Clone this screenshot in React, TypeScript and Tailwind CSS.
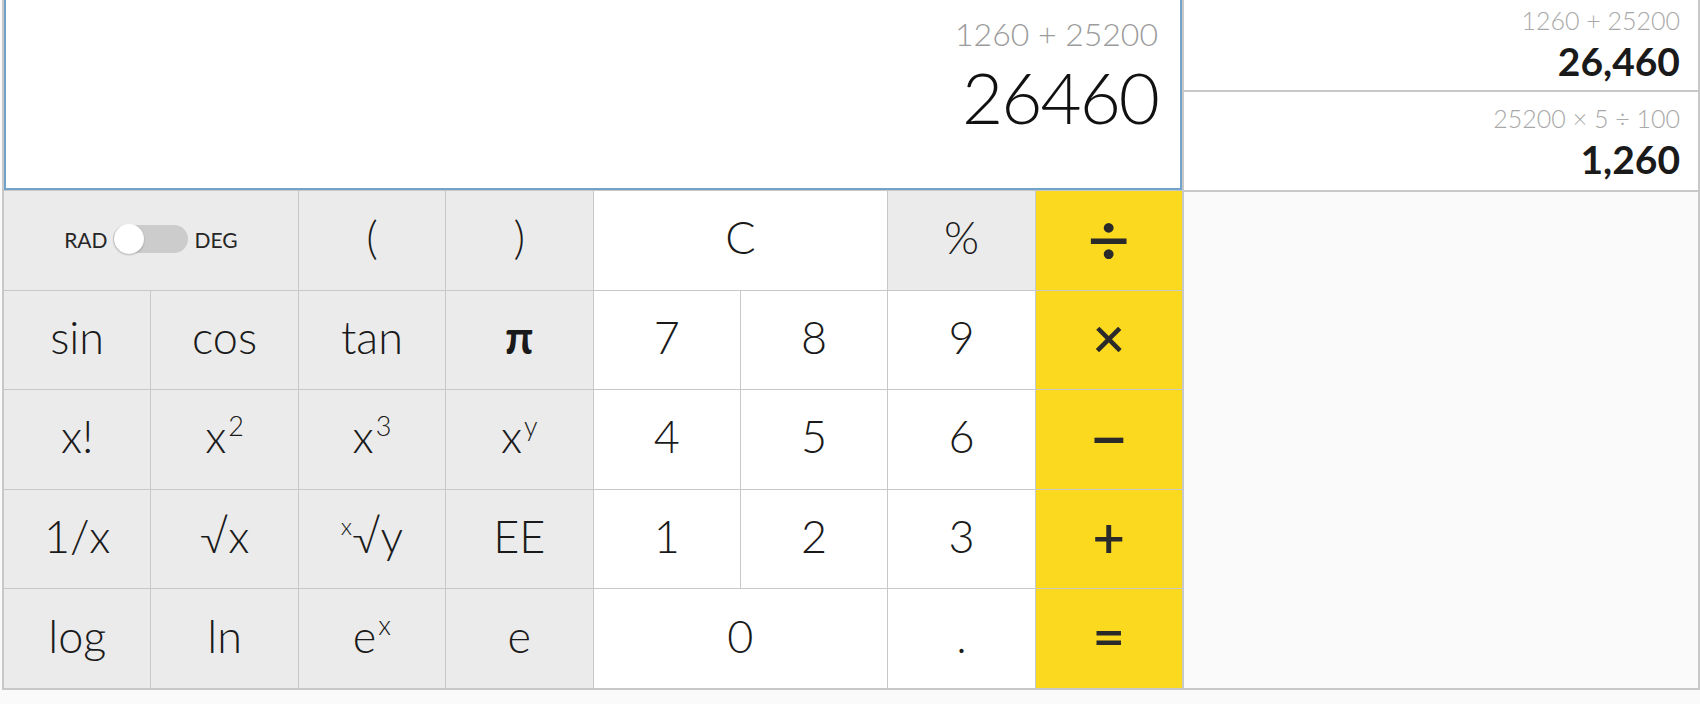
import React, { type ReactNode } from 'react'

type KeyKind = 'fn' | 'num' | 'op'

type KeyProps = {
  kind: KeyKind
  wide?: boolean
  children: ReactNode
}

const kindClass: Record<KeyKind, string> = {
  fn: 'bg-[#ebebeb] text-[45px] font-light text-[#1a1a1a]',
  num: 'bg-white text-[45px] font-light text-[#1a1a1a]',
  op: 'bg-[#fad91f] text-[56px] font-semibold text-[#2a2a2a]'
}

const Key: React.FC<KeyProps> = ({ kind, wide = false, children }) => (
  <div
    className={`flex items-center justify-center pb-[5px] leading-none ${kindClass[kind]} ${
      wide ? 'col-span-2' : ''
    }`}
  >
    {children}
  </div>
)

const Sup: React.FC<{ children: ReactNode }> = ({ children }) => (
  <sup className="-top-[0.4em] ml-[2px] text-[27px]">{children}</sup>
)

const AngleToggle = () => (
  <div className="col-span-2 flex items-center justify-center gap-[6px] bg-[#ebebeb] pb-[2px] text-[21px] text-[#262626]">
    <span>RAD</span>
    <div className="relative h-[28px] w-[75px] rounded-full bg-[#cccccc]">
      <div className="absolute -top-[1px] left-[1px] h-[30px] w-[30px] rounded-full bg-white shadow-[0_1px_2px_rgba(0,0,0,0.25)]" />
    </div>
    <span>DEG</span>
  </div>
)

type HistoryItem = { expr: string; result: string }

const history: HistoryItem[] = [
  { expr: '1260 + 25200', result: '26,460' },
  { expr: '25200 × 5 ÷ 100', result: '1,260' }
]

export default function App() {
  return (
    <div className="h-[704px] w-[1700px] overflow-hidden bg-[#fafafa] font-['Lato',sans-serif] text-[#222]">
      <div className="ml-[2px] flex w-[1698px] border-x-2 border-b-2 border-[#c8c8c8]">
        {/* calculator */}
        <div className="flex w-[1178px] flex-col">
          <div className="flex h-[190px] flex-col items-end border-2 border-t-0 border-[#6fa3cb] bg-white pr-[22px] pt-[15px]">
            <div className="text-[32px] font-light leading-[38px] text-[#9b9b9b]">1260 + 25200</div>
            <div className="mt-[4px] text-[71px] font-light leading-[80px] tracking-[-2px] text-[#111]">26460</div>
          </div>

          <div className="grid h-[498px] grid-cols-8 grid-rows-5 gap-px border-t border-[#c8c8c8] bg-[#c8c8c8]">
            <AngleToggle />
            <Key kind="fn">(</Key>
            <Key kind="fn">)</Key>
            <Key kind="num" wide>C</Key>
            <Key kind="fn">%</Key>
            <Key kind="op">
              <span className="text-[74px] font-medium">÷</span>
            </Key>

            <Key kind="fn">sin</Key>
            <Key kind="fn">cos</Key>
            <Key kind="fn">tan</Key>
            <Key kind="fn">
              <span className="font-bold">π</span>
            </Key>
            <Key kind="num">7</Key>
            <Key kind="num">8</Key>
            <Key kind="num">9</Key>
            <Key kind="op">×</Key>

            <Key kind="fn">x!</Key>
            <Key kind="fn">
              x<Sup>2</Sup>
            </Key>
            <Key kind="fn">
              x<Sup>3</Sup>
            </Key>
            <Key kind="fn">
              x<Sup>y</Sup>
            </Key>
            <Key kind="num">4</Key>
            <Key kind="num">5</Key>
            <Key kind="num">6</Key>
            <Key kind="op">
              <span className="text-[66px]">−</span>
            </Key>

            <Key kind="fn">1/x</Key>
            <Key kind="fn">√x</Key>
            <Key kind="fn">
              <sup className="-top-[0.45em] text-[24px]">x</sup>√y
            </Key>
            <Key kind="fn">EE</Key>
            <Key kind="num">1</Key>
            <Key kind="num">2</Key>
            <Key kind="num">3</Key>
            <Key kind="op">+</Key>

            <Key kind="fn">log</Key>
            <Key kind="fn">ln</Key>
            <Key kind="fn">
              e<Sup>x</Sup>
            </Key>
            <Key kind="fn">e</Key>
            <Key kind="num" wide>0</Key>
            <Key kind="num">.</Key>
            <Key kind="op">=</Key>
          </div>
        </div>

        {/* history */}
        <div className="flex flex-1 flex-col border-l-2 border-[#c8c8c8] bg-[#fafafa]">
          {history.map((item, i) => (
            <div
              key={item.expr}
              className={`flex flex-col items-end justify-center border-b-2 border-[#c8c8c8] bg-white pr-[18px] ${
                i === 0 ? 'h-[92px] pb-[4px]' : 'h-[100px]'
              }`}
            >
              <div className="text-[25px] font-light leading-[30px] text-[#a8a8a8]">{item.expr}</div>
              <div className="mt-[5px] text-[39px] font-bold leading-[42px] text-[#1a1a1a]">{item.result}</div>
            </div>
          ))}
        </div>
      </div>
    </div>
  )
}
